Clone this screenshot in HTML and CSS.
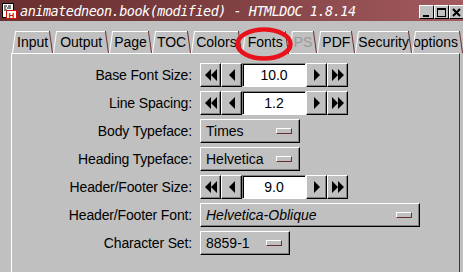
FILE: index.html
```html
<!DOCTYPE html>
<html lang="en">
<head>
  <meta charset="UTF-8">
  <title>HTMLDOC 1.8.14</title>
  <link rel="stylesheet" href="styles.css">
</head>
<body>
  <div class="window">
    <div class="titlebar">
      <svg class="app-icon" width="15" height="16" viewBox="0 0 15 16">
        <rect x="0.5" y="0.5" width="11" height="14" fill="#fff" stroke="#000"/>
        <path d="M2 3h3M6 3h3M2 5h2M5 5h4M2 7h3" stroke="#000" stroke-width="1"/>
        <rect x="4.5" y="7.5" width="10" height="8" fill="#fff" stroke="#d01010"/>
        <text x="9.5" y="14.5" font-family="Liberation Sans" font-size="8" font-weight="bold" fill="#d01010" text-anchor="middle">H</text>
      </svg>
      <span class="title">animatedneon.book(modified) - HTMLDOC 1.8.14</span>
      <div class="win-buttons">
        <span class="win-btn">
          <svg width="13" height="11" viewBox="0 0 13 11"><rect x="3" y="8" width="6" height="2" fill="#000"/></svg>
        </span>
        <span class="win-btn">
          <svg width="13" height="11" viewBox="0 0 13 11"><rect x="2.5" y="1.5" width="8" height="8" fill="none" stroke="#000"/><rect x="2" y="1" width="9" height="2" fill="#000"/></svg>
        </span>
        <span class="win-btn">
          <svg width="13" height="11" viewBox="0 0 13 11"><path d="M3 2l7 7M10 2l-7 7" stroke="#000" stroke-width="2"/></svg>
        </span>
      </div>
    </div>

    <div class="tabs">
      <span class="tab">Input</span>
      <span class="tab tab-roomy">Output</span>
      <span class="tab">Page</span>
      <span class="tab">TOC</span>
      <span class="tab">Colors</span>
      <span class="tab tab-active">Fonts</span>
      <span class="tab tab-disabled">PS</span>
      <span class="tab">PDF</span>
      <span class="tab tab-tight">Security</span>
      <span class="tab tab-clipped">options</span>
    </div>

    <div class="panel">
      <div class="form">
        <label class="field-label">Base Font Size:</label>
        <div class="spinner">
          <span class="arrow-btn"><svg width="12" height="12" viewBox="0 0 12 12"><path d="M6 0v12L0 6zM12 0v12L6 6z"/></svg></span>
          <span class="arrow-btn"><svg width="6" height="12" viewBox="0 0 6 12"><path d="M6 0v12L0 6z"/></svg></span>
          <span class="value">10.0</span>
          <span class="arrow-btn"><svg width="6" height="12" viewBox="0 0 6 12"><path d="M0 0v12L6 6z"/></svg></span>
          <span class="arrow-btn"><svg width="12" height="12" viewBox="0 0 12 12"><path d="M0 0v12L6 6zM6 0v12L12 6z"/></svg></span>
        </div>

        <label class="field-label">Line Spacing:</label>
        <div class="spinner">
          <span class="arrow-btn"><svg width="12" height="12" viewBox="0 0 12 12"><path d="M6 0v12L0 6zM12 0v12L6 6z"/></svg></span>
          <span class="arrow-btn"><svg width="6" height="12" viewBox="0 0 6 12"><path d="M6 0v12L0 6z"/></svg></span>
          <span class="value">1.2</span>
          <span class="arrow-btn"><svg width="6" height="12" viewBox="0 0 6 12"><path d="M0 0v12L6 6z"/></svg></span>
          <span class="arrow-btn"><svg width="12" height="12" viewBox="0 0 12 12"><path d="M0 0v12L6 6zM6 0v12L12 6z"/></svg></span>
        </div>

        <label class="field-label">Body Typeface:</label>
        <div class="choice choice-md"><span>Times</span><span class="choice-mark"></span></div>

        <label class="field-label">Heading Typeface:</label>
        <div class="choice choice-md"><span>Helvetica</span><span class="choice-mark"></span></div>

        <label class="field-label">Header/Footer Size:</label>
        <div class="spinner">
          <span class="arrow-btn"><svg width="12" height="12" viewBox="0 0 12 12"><path d="M6 0v12L0 6zM12 0v12L6 6z"/></svg></span>
          <span class="arrow-btn"><svg width="6" height="12" viewBox="0 0 6 12"><path d="M6 0v12L0 6z"/></svg></span>
          <span class="value">9.0</span>
          <span class="arrow-btn"><svg width="6" height="12" viewBox="0 0 6 12"><path d="M0 0v12L6 6z"/></svg></span>
          <span class="arrow-btn"><svg width="12" height="12" viewBox="0 0 12 12"><path d="M0 0v12L6 6zM6 0v12L12 6z"/></svg></span>
        </div>

        <label class="field-label">Header/Footer Font:</label>
        <div class="choice choice-wide"><span class="italic">Helvetica-Oblique</span><span class="choice-mark"></span></div>

        <label class="field-label">Character Set:</label>
        <div class="choice choice-sm"><span>8859-1</span><span class="choice-mark"></span></div>
      </div>
    </div>

    <!-- red highlight drawn over the Fonts tab -->
    <svg class="highlight" width="62" height="36" viewBox="0 0 62 36">
      <ellipse cx="30" cy="17" rx="26.5" ry="14.5" fill="none" stroke="#e8121c" stroke-width="4.5"/>
    </svg>
  </div>
</body>
</html>
```

FILE: styles.css
```css
body {
  margin: 0;
  font-family: "Liberation Sans", Arial, sans-serif;
  font-size: 14px;
  color: #000;
}

.window {
  position: relative;
  width: 463px;
  height: 272px;
  overflow: hidden;
  background-color: #c0c0c0;
  display: flex;
  flex-direction: column;
}

/* title bar */
.titlebar {
  height: 21px;
  display: flex;
  align-items: center;
  background: linear-gradient(to right, #6a2f30, #7a3c3e 40%, #a35b60);
  flex-shrink: 0;
}

.app-icon {
  margin-left: 2px;
  flex-shrink: 0;
}

.title {
  margin-left: 3px;
  color: #fff;
  font-family: "DejaVu Sans Mono", monospace;
  font-style: oblique;
  font-size: 13.5px;
  letter-spacing: -0.5px;
  white-space: nowrap;
}

.win-buttons {
  margin-left: auto;
  display: flex;
  align-self: flex-start;
  margin-top: 5px;
  margin-right: -1px;
}

.win-btn {
  width: 15px;
  height: 14px;
  box-sizing: border-box;
  background-color: #c0c0c0;
  border: 1px solid;
  border-color: #fff #000 #000 #fff;
  display: flex;
  align-items: center;
  justify-content: center;
}

/* tabs */
.tabs {
  display: flex;
  margin-top: 10px;
  padding-left: 12px;
  height: 22px;
  flex-shrink: 0;
  position: relative;
  z-index: 1;
}

.tab {
  position: relative;
  flex-shrink: 0;
  padding: 0 5px;
  line-height: 23px;
  white-space: nowrap;
  background: linear-gradient(#fff, #fff) no-repeat 3px 0 / calc(100% - 6px) 1px;
}

.tab::before,
.tab::after {
  content: "";
  position: absolute;
  top: 0;
  bottom: 0;
  width: 0;
  transform-origin: bottom;
}

.tab::before {
  left: 0;
  border-left: 1px solid #fff;
  transform: skewX(-8deg);
}

.tab::after {
  right: 0;
  border-right: 1px solid #6b2e2e;
  transform: skewX(8deg);
}

.tab-roomy {
  padding: 0 7px;
}

.tab-tight {
  padding: 0 3px;
}

.tab-clipped {
  padding: 0 5px 0 1px;
}

.tab-active {
  height: 23px;
  padding: 0 6px 0 6px;
  box-shadow: inset 0 -2px 0 #c0c0c0;
}

.tab-disabled {
  color: #9a9a9a;
}

/* panel */
.panel {
  flex: 1;
  margin-left: 11px;
  width: 447px;
  border-top: 1px solid #fff;
  border-left: 1px solid #fff;
  border-right: 1px solid #5e2a2c;
}

.form {
  display: grid;
  grid-template-columns: 180px auto;
  column-gap: 8px;
  row-gap: 4px;
  padding-top: 9px;
  align-items: center;
  justify-items: start;
}

.field-label {
  justify-self: end;
  white-space: nowrap;
  letter-spacing: -0.15px;
}

.spinner {
  display: flex;
  height: 24px;
}

.arrow-btn {
  width: 21px;
  height: 24px;
  box-sizing: border-box;
  border: 1px solid;
  border-color: #fff #000 #000 #fff;
  box-shadow: inset -1px -1px 0 #808080;
  display: flex;
  align-items: center;
  justify-content: center;
}

.value {
  width: 64px;
  height: 24px;
  box-sizing: border-box;
  background-color: #fff;
  border: 1px solid;
  border-color: #808080 #fff #fff #808080;
  box-shadow: inset 1px 1px 0 #000;
  text-align: center;
  line-height: 22px;
}

.choice {
  height: 24px;
  box-sizing: border-box;
  display: flex;
  align-items: center;
  justify-content: space-between;
  padding: 0 7px 0 5px;
  border: 1px solid;
  border-color: #fff #000 #000 #fff;
  box-shadow: inset -1px -1px 0 #808080;
}

.choice-md {
  width: 100px;
}

.choice-wide {
  width: 220px;
}

.choice-sm {
  width: 90px;
}

.choice-mark {
  width: 16px;
  height: 6px;
  box-sizing: border-box;
  border: 1px solid;
  border-color: #fff #6b2e2e #6b2e2e #fff;
}

.italic {
  font-style: italic;
}

.highlight {
  position: absolute;
  left: 234px;
  top: 27px;
  z-index: 2;
}
```
